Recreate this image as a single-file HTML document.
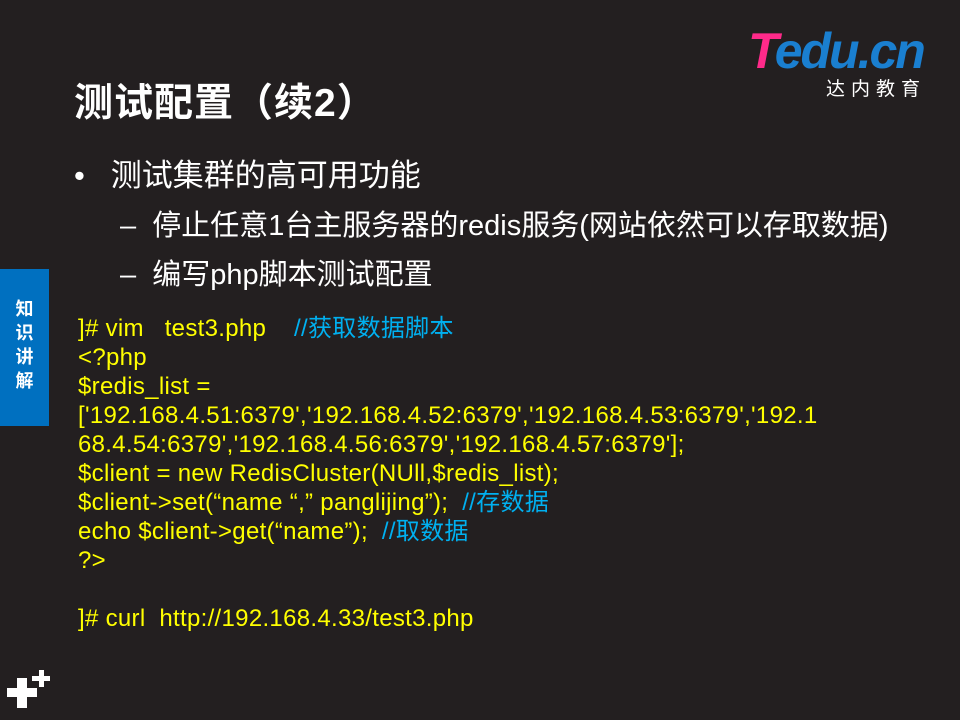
<!DOCTYPE html>
<html><head><meta charset="utf-8"><style>
body{margin:0;width:960px;height:720px;background:#231f20;position:relative;overflow:hidden;font-family:"Liberation Sans","Noto Sans CJK SC",sans-serif;color:#fff}
.a{position:absolute;white-space:nowrap}
.code{color:#ffff00;font-size:24px;letter-spacing:0.3px;line-height:29px}
.c{color:#00b0f0}
</style></head><body>
<div class="a" style="left:74px;top:72px;font-size:39px;font-weight:bold;letter-spacing:1px">测试配置（续2）</div>
<div class="a" style="left:748px;top:24px;font-size:50px;font-weight:bold;font-style:italic;letter-spacing:-2px;line-height:54px"><span style="color:#ff2a8a">T</span><span style="color:#1a7fd0">edu.cn</span></div>
<div class="a" style="left:826px;top:74px;font-size:19px;letter-spacing:6px">达内教育</div>
<div class="a" style="left:74px;top:150px;font-size:31px">•&nbsp;&nbsp;&nbsp;测试集群的高可用功能</div>
<div class="a" style="left:120px;top:202px;font-size:29px">–&nbsp;&nbsp;停止任意1台主服务器的redis服务(网站依然可以存取数据)</div>
<div class="a" style="left:120px;top:251px;font-size:29px">–&nbsp;&nbsp;编写php脚本测试配置</div>
<div class="a" style="left:0;top:269px;width:49px;height:157px;background:#0070c0;color:#fff;font-weight:bold;font-size:18px;line-height:24px;text-align:center;padding-top:28px;box-sizing:border-box">知<br>识<br>讲<br>解</div>
<div class="a code" style="left:78px;top:314px">]# vim&nbsp;&nbsp;&nbsp;test3.php&nbsp;&nbsp;&nbsp;&nbsp;<span class="c">//获取数据脚本</span><br>&lt;?php<br>$redis_list =<br>['192.168.4.51:6379','192.168.4.52:6379','192.168.4.53:6379','192.1<br>68.4.54:6379','192.168.4.56:6379','192.168.4.57:6379'];<br>$client = new RedisCluster(NUll,$redis_list);<br>$client-&gt;set(“name “,” panglijing”);&nbsp;&nbsp;<span class="c">//存数据</span><br>echo $client-&gt;get(“name”);&nbsp;&nbsp;<span class="c">//取数据</span><br>?&gt;<br><br>]# curl&nbsp;&nbsp;http://192.168.4.33/test3.php</div>
<div class="a" style="left:7px;top:688px;width:30px;height:9px;background:#fff"></div>
<div class="a" style="left:17px;top:678px;width:10px;height:30px;background:#fff"></div>
<div class="a" style="left:32px;top:676px;width:18px;height:5px;background:#fff"></div>
<div class="a" style="left:38.5px;top:670px;width:5px;height:17px;background:#fff"></div>
</body></html>
